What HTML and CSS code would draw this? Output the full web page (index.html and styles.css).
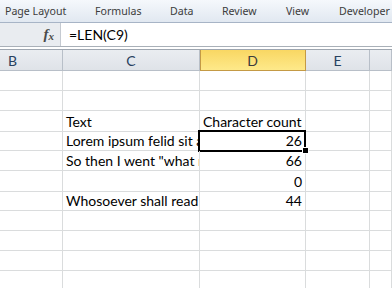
FILE: index.html
```html
<!DOCTYPE html>
<html lang="en">
<head>
  <meta charset="UTF-8" />
  <title>LEN</title>
  <link rel="stylesheet" href="styles.css">
</head>
<body>
  <div class="tabs">
    <span class="tab t1">Page Layout</span>
    <span class="tab t2">Formulas</span>
    <span class="tab t3">Data</span>
    <span class="tab t4">Review</span>
    <span class="tab t5">View</span>
    <span class="tab t6">Developer</span>
  </div>
  <div class="fbar">
    <div class="namebox"><span class="fx">f<sub>x</sub></span></div>
    <div class="formula">=LEN(C9)</div>
  </div>
  <div class="sheet">
    <div class="hd">B</div><div class="hd">C</div><div class="hd sel">D</div><div class="hd">E</div><div class="hd"></div>

    <div class="c"></div><div class="c"></div><div class="c"></div><div class="c"></div><div class="c"></div>
    <div class="c"></div><div class="c"></div><div class="c"></div><div class="c"></div><div class="c"></div>
    <div class="c tall"></div><div class="c tall">Text</div><div class="c tall free">Character count</div><div class="c tall"></div><div class="c tall"></div>
    <div class="c"></div><div class="c">Lorem ipsum felid sit amet</div><div class="c num active">26<span class="handle"></span></div><div class="c"></div><div class="c"></div>
    <div class="c"></div><div class="c">So then I went "what now?"</div><div class="c num">66</div><div class="c"></div><div class="c"></div>
    <div class="c tall"></div><div class="c tall"></div><div class="c tall num">0</div><div class="c tall"></div><div class="c tall"></div>
    <div class="c"></div><div class="c">Whosoever shall read this</div><div class="c num">44</div><div class="c"></div><div class="c"></div>
    <div class="c"></div><div class="c"></div><div class="c"></div><div class="c"></div><div class="c"></div>
    <div class="c"></div><div class="c"></div><div class="c"></div><div class="c"></div><div class="c"></div>
    <div class="c"></div><div class="c"></div><div class="c"></div><div class="c"></div><div class="c"></div>
    <div class="c"></div><div class="c"></div><div class="c"></div><div class="c"></div><div class="c"></div>
  </div>
</body>
</html>
```
FILE: styles.css
```css
body {
  margin: 0;
  width: 392px;
  height: 288px;
  overflow: hidden;
  background: #fff;
  font-family: Lato, 'Open Sans', sans-serif;
}
.tabs {
  height: 22px;
  border-bottom: 1px solid #a7b4c6;
  background: linear-gradient(to bottom, #f5f8fc, #e1e8f1);
  position: relative;
  font-family: 'Noto Sans', sans-serif;
  font-size: 10.6px;
  color: #3c3c3c;
}
.tab {
  position: absolute;
  top: 4px;
  white-space: nowrap;
}
.t1 { left: 5px; }
.t2 { left: 95px; }
.t3 { left: 170px; }
.t4 { left: 222px; }
.t5 { left: 286px; }
.t6 { left: 339px; }
.fbar {
  display: flex;
  height: 23px;
  border-bottom: 1px solid #a9b0b8;
}
.namebox {
  width: 61px;
  background: #e9ecf0;
  border-right: 1px solid #c5cad1;
  display: flex;
  justify-content: flex-end;
  align-items: center;
  padding-right: 6px;
  box-sizing: border-box;
}
.fx {
  font-family: 'Liberation Serif', serif;
  font-style: italic;
  font-weight: bold;
  font-size: 15px;
  color: #4a4a4a;
}
.fx sub {
  font-size: 11px;
  vertical-align: -1px;
}
.formula {
  padding-left: 8px;
  font-size: 14px;
  line-height: 23px;
  color: #000;
}
.sheet {
  margin-top: 2px;
  border-top: 1px solid #9ea6b0;
  display: grid;
  grid-template-columns: 63px 137px 106px 64px 1fr;
  grid-auto-rows: 20px;
  grid-template-rows: 21px;
}
.hd {
  background: linear-gradient(to bottom, #eaedf1, #dfe3e8);
  border-right: 1px solid #b8bfc8;
  border-bottom: 1px solid #b8bfc8;
  font-size: 14px;
  color: #27415f;
  display: flex;
  justify-content: center;
  align-items: center;
}
.hd:first-child {
  justify-content: flex-start;
  padding-left: 8px;
}
.hd.sel {
  background: linear-gradient(to bottom, #f9d763, #fee98a);
  border-right-color: #c49a45;
  border-bottom-color: #c49a45;
  box-shadow: inset 1px 0 0 #c49a45;
  color: #3c3c3c;
}
.c {
  border-right: 1px solid #dadcdd;
  border-bottom: 1px solid #dadcdd;
  font-size: 14px;
  line-height: 17px;
  color: #000;
  display: flex;
  align-items: flex-end;
  padding: 0 3px 1px;
  white-space: nowrap;
  overflow: hidden;
  position: relative;
}
.c.tall {
  height: 21px;
  box-sizing: border-box;
}
.free {
  overflow: visible;
}
.num {
  justify-content: flex-end;
}
.active {
  overflow: visible;
}
.active::after {
  content: '';
  position: absolute;
  left: -2px;
  top: -1px;
  right: -1px;
  bottom: -2px;
  border: 2px solid #000;
}
.handle {
  position: absolute;
  right: -4px;
  bottom: -4px;
  width: 5px;
  height: 5px;
  background: #000;
  border: 1px solid #fff;
  z-index: 2;
}
```
